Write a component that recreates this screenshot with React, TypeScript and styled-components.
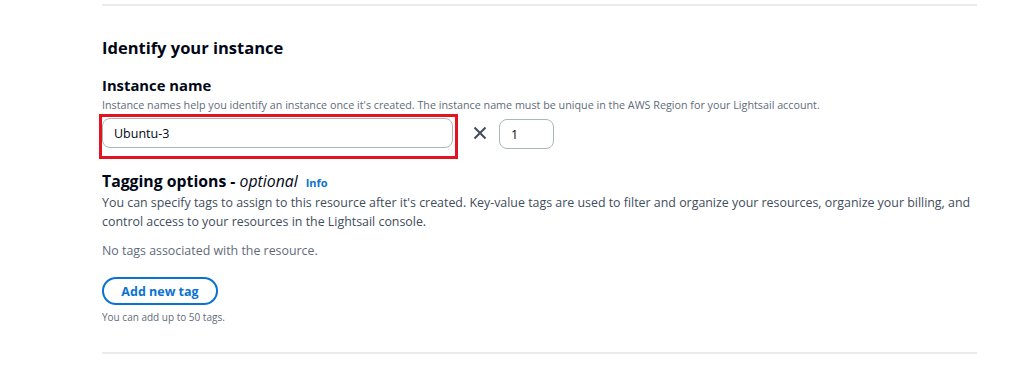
import React from 'react';
import styled, { createGlobalStyle } from 'styled-components';

const GlobalStyle = createGlobalStyle`
    body {
        margin: 0;
        background: #ffffff;
        font-family: "Open Sans", "Noto Sans", sans-serif;
        color: #000716;
    }
`;

const Page = styled.div`
    width: 1024px;
    height: 367px;
    padding: 4px 47px 0 102px;
    box-sizing: border-box;
`;

const Divider = styled.hr`
    margin: 0;
    border: none;
    border-top: 2px solid #e9ebed;
`;

const Section = styled.section`
    padding: 31px 0 28px;
`;

const Heading = styled.h2`
    margin: 0 0 16px;
    font-size: 16.5px;
    font-weight: 700;
    line-height: 22px;
`;

const Label = styled.h3`
    margin: 0;
    font-size: 14.8px;
    font-weight: 700;
    line-height: 20px;
`;

const Hint = styled.div`
    font-size: 10.75px;
    color: #5f6b7a;
    line-height: 14px;
    white-space: nowrap;
`;

const FieldHint = styled(Hint)`
    margin-top: 3px;
`;

const InputRow = styled.div`
    display: flex;
    align-items: flex-start;
    margin-top: 2px;
`;

const Highlight = styled.div`
    margin-left: -3px;
    border: 3px solid #e3141f;
    padding: 1px 1px 8px 0;
    width: 352px;
`;

const TextBox = styled.div<{ $width: number }>`
    box-sizing: border-box;
    width: ${p => p.$width}px;
    height: 30px;
    border: 1px solid #aab7b8;
    border-radius: 8px;
    padding: 0 11px;
    display: flex;
    align-items: center;
    font-size: 12.5px;
    color: #000716;
`;

const Times = styled.span`
    margin: 12px 12px 0 15px;
    display: flex;
    align-items: center;
`;

const NumberBox = styled(TextBox)`
    margin-top: 5px;
`;

const TagTitle = styled.h3`
    margin: 12px 0 0;
    font-size: 15.8px;
    font-weight: 700;
    line-height: 20px;
    display: flex;
    align-items: baseline;
    white-space: pre;
`;

const Optional = styled.span`
    font-weight: 400;
    font-style: italic;
`;

const InfoLink = styled.a`
    font-size: 11px;
    font-weight: 700;
    color: #0972d3;
    margin-left: 8px;
    text-decoration: none;
`;

const Body = styled.p<{ $muted?: boolean }>`
    margin: 0;
    font-size: 12.4px;
    line-height: 19px;
    color: ${p => (p.$muted ? '#5f6b7a' : '#414d5c')};
`;

const Empty = styled(Body)`
    margin-top: 10px;
`;

const AddButton = styled.button`
    display: block;
    margin-top: 17px;
    height: 28px;
    width: 116px;
    padding: 0;
    border: 2px solid #0972d3;
    border-radius: 20px;
    background: #fff;
    color: #0972d3;
    font-family: inherit;
    font-size: 12.5px;
    font-weight: 700;
    white-space: nowrap;
`;

const Constraint = styled(Hint)`
    margin-top: 5px;
    font-size: 10px;
`;

const XIcon = () => (
    <svg width="14" height="14" viewBox="0 0 14 14">
        <path d="M1.5 1.5l11 11M12.5 1.5l-11 11" stroke="#414d5c" strokeWidth="2" fill="none" />
    </svg>
);

const App = () => (
    <Page>
        <GlobalStyle />
        <Divider />
        <Section>
            <Heading>Identify your instance</Heading>
            <Label>Instance name</Label>
            <FieldHint>
                Instance names help you identify an instance once it's created. The instance name must be unique in the AWS Region for your Lightsail account.
            </FieldHint>
            <InputRow>
                <Highlight>
                    <TextBox $width={351}>Ubuntu-3</TextBox>
                </Highlight>
                <Times><XIcon /></Times>
                <NumberBox $width={55}>1</NumberBox>
            </InputRow>
            <TagTitle>
                Tagging options - <Optional>optional</Optional>
                <InfoLink href="#">Info</InfoLink>
            </TagTitle>
            <Body>
                You can specify tags to assign to this resource after it's created. Key-value tags are used to filter and organize your resources, organize your billing, and control access to your resources in the Lightsail console.
            </Body>
            <Empty $muted>No tags associated with the resource.</Empty>
            <AddButton>Add new tag</AddButton>
            <Constraint>You can add up to 50 tags.</Constraint>
        </Section>
        <Divider />
    </Page>
);

export default App;
